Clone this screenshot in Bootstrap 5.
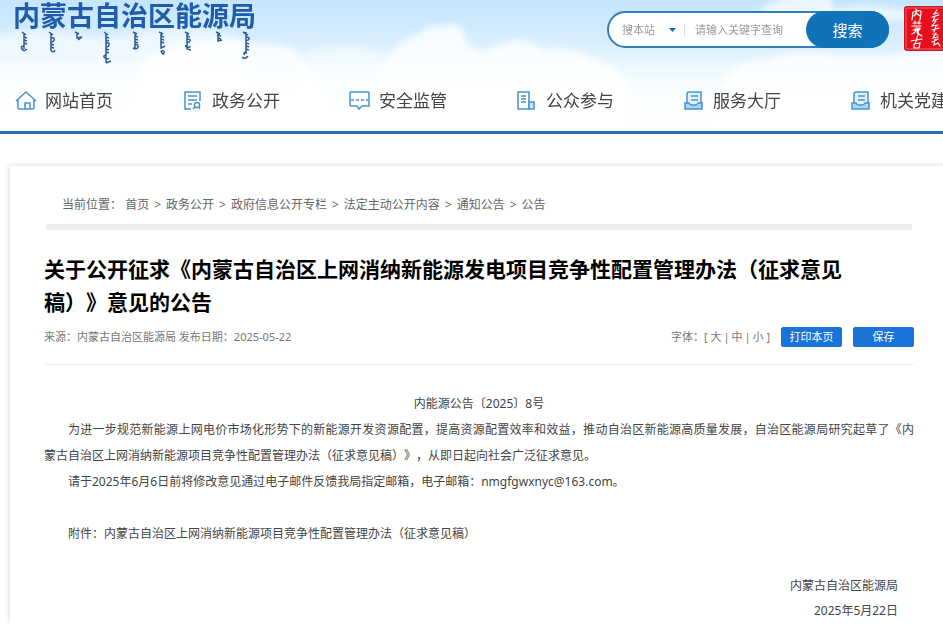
<!DOCTYPE html>
<html lang="zh-CN">
<head>
<meta charset="utf-8">
<meta name="viewport" content="width=device-width, initial-scale=1">
<title>内蒙古自治区能源局 - 通知公告</title>
<link href="https://cdn.jsdelivr.net/npm/bootstrap@5.3.0/dist/css/bootstrap.min.css" rel="stylesheet">
<style>
  body { font-family: "Noto Sans", "Noto Sans CJK SC", sans-serif; font-size: 12px; line-height: 26px; color: #444; background: #fff; overflow-x: hidden; text-spacing-trim: space-all; }
  a { color: inherit; text-decoration: none; }
  .site-header { border-bottom: 3px solid #2474b0; background: linear-gradient(#c4e5fe 0, #d9eefe 44px, #f2faff 74px, #fafdff 90px, #fff 125px); overflow: hidden; }
  .sky { inset: 0; width: 100%; height: 100%; }
  .masthead { height: 71px; padding-left: 12px; }
  .site-name { font-size: 27px; line-height: 31px; font-weight: 700; color: #1f5ca9; margin: 0; padding-left: 1px; white-space: nowrap; }
  .script-row { display: block; width: 248px; height: 36px; }
  .search-box { width: 282px; height: 37px; margin-top: 11px; margin-right: 15px; border: 2px solid #2f7fb8; border-radius: 19px; background: #fff; }
  .search-box select { width: 60px; font-size: 11px; color: #999; border: 0; background: transparent; appearance: none; padding: 0 0 0 13px; }
  .caret-mark { width: 7px; height: 4px; margin-right: 8px; }
  .search-box .divider { width: 1px; height: 12px; background: #ddd; }
  .search-box input { width: 0; font-size: 11px; border: 0; background: transparent; padding: 0 0 0 10px; outline: 0; }
  .search-box input::placeholder { color: #999; opacity: 1; }
  .search-box button { width: 83px; margin: -2px; border: 0; border-radius: 19px; background: #1072b8; color: #fff; font-size: 15px; }
  .seal { width: 46px; height: 46px; margin-top: 6px; margin-right: -7px; }
  .main-nav { height: 60px; padding-left: 15px; }
  .main-nav .nav-item { flex: 0 0 167px; }
  .main-nav a { font-size: 17px; line-height: 24px; color: #444; gap: 8px; white-space: nowrap; }
  .main-nav svg { width: 22px; height: 22px; fill: none; stroke: #4794cb; stroke-width: 1.5; }
  .sheet { margin: 32px 0 0 10px; padding: 26px 29px 0 34px; background: #fff; box-shadow: 0 0 5px 1px rgba(0,0,0,.13); clip-path: inset(-6px 0 0 -6px); }
  .crumbs { padding: 0 18px; color: #666; white-space: nowrap; }
  .crumbs .gap-mark { margin: 0 5px; }
  .crumb-bar { height: 6px; margin: 6px 2px 0; background: #eee; }
  .headline { font-size: 21px; line-height: 33px; font-weight: 700; color: #000; margin: 23px 0 0; }
  .meta { font-size: 11px; line-height: 20px; color: #777; padding: 8px 0 17px; border-bottom: 1px solid #eee; }
  .meta .bar-mark { margin: 0 2px; }
  .meta .btn { width: 61px; height: 20px; margin-left: 11px; padding: 0; font-size: 11px; line-height: 18px; border-radius: 2px; background: #1a73d6; border-color: #1a73d6; color: #fff; }
  .article { padding-top: 26px; }
  .article p { margin: 0; text-indent: 24px; }
  .article .full-line { display: block; text-align-last: justify; }
  .article .rest { display: block; text-indent: 0; }
  .sign { padding-right: 16px; line-height: 25px; }
</style>
</head>
<body>
<header class="site-header position-relative">
  <svg class="sky position-absolute" viewBox="0 0 943 131" preserveAspectRatio="none" aria-hidden="true">
    <defs><filter id="soft" x="-10%" y="-30%" width="120%" height="160%"><feGaussianBlur stdDeviation="3"/></filter></defs>
    <g fill="#fff" filter="url(#soft)">
      <path opacity=".55" d="M-10 36Q30 26 70 34T150 30Q210 24 250 44V140H-10z"/>
      <path opacity=".75" d="M140 66Q170 40 200 42Q230 34 262 44Q290 42 302 56Q314 76 330 86V140H120z"/>
      <path opacity=".5" d="M300 60Q312 44 330 48Q360 44 385 52V140H300z"/>
      <path opacity=".8" d="M385 60Q400 38 420 34Q424 24 440 26Q452 22 462 28Q466 48 482 52Q500 42 520 40Q536 42 545 50Q575 46 592 58Q620 64 630 86V140H360z"/>
      <path opacity=".75" d="M725 80Q735 58 765 60Q790 48 830 54T953 46V140H700z"/>
      <path opacity=".65" d="M760 8Q775 2 785 -4H830L835 10Q860 2 890 8T953 4V20H770z"/>
    </g>
  </svg>
  <div class="masthead position-relative d-flex align-items-start">
    <div class="me-auto">
      <h1 class="site-name">内蒙古自治区能源局</h1>
      <svg class="script-row" viewBox="0 0 248 36" fill="none" stroke="#2c5b96" stroke-width="1.5" aria-hidden="true">
        <path d="M12 2v16M10 1l4 3M12 6l3 1M12 9l3 1M12 12l3 1M12 15q-4 0-2 3t5 0"/>
        <path d="M39 2v18M37 1l4 3M39 7q4-1 3 2t-3 1M39 13l3 1M39 16l3 1M39 20q3 2 4-1"/>
        <path d="M65 2v5l5-1-4 3M63 1l4 2"/>
        <path d="M94 2v30M92 1l4 3M94 6l3 1M94 9l3 1M94 12q4-1 3 2t-3 1M94 18l3 1M94 21l3 1M94 24q-4 1-1 3t4 0M94 32l5-2"/>
        <path d="M123 1v16M121 1l4 2M123 5l3 1M123 8l3 1M123 11l3 1M123 14q4-1 3 2t-5 1"/>
        <path d="M149 1v16l4-2M147 1l4 2M149 5l3 1M149 8l3 1M149 11l3 1M149 20q4-1 3 2t-3-2"/>
        <path d="M175 1v17l4 1M173 1l4 2M175 5l3 1M175 8q4 0 3 2t-3 1M175 14q-3 1 0 2t3-1"/>
        <path d="M206 1v9l4-1M204 1l4 2M206 4l3 1M206 7l3 1"/>
        <path d="M234 1v22M231 1l5 3M234 6q4 0 3 2t-3 1M234 12l3 1M234 15l3 1M234 18l3 1M234 21q-4 1-1 3M230 26q3 3 6-1"/>
      </svg>
    </div>
    <form class="search-box d-flex" role="search">
      <select aria-label="搜索范围"><option>搜本站</option></select>
      <svg class="caret-mark align-self-center" viewBox="0 0 7 4" aria-hidden="true"><path fill="#1072b8" d="M0 0h7L3.5 4z"/></svg>
      <span class="divider align-self-center"></span>
      <input class="flex-grow-1" type="text" aria-label="关键字" placeholder="请输入关键字查询">
      <button type="button">搜索</button>
    </form>
    <svg class="seal flex-shrink-0" viewBox="0 0 46 46" role="img" aria-label="印章">
      <rect x=".5" y=".5" width="50" height="44" rx="2" fill="#e70f1c" stroke="#c91722"/>
      <rect x="2" y="2" width="48" height="41" rx="1" fill="none" stroke="#ff9ca0" stroke-width=".6"/>
      <g fill="none" stroke="#fff" stroke-width="1.2" stroke-linecap="round">
        <path d="M9 6l-1 8M10 6q8-3 7 1l-1 7M12 3q1 5-2 7M12 7l4 3"/>
        <path d="M9 17h8M11 15v3M15 15v3M8 20h9M11 22h5M9 24l6-1M13 23q-2 4-5 5M13 24q3 3 0 7M13 27l5 3M16 23l-3 3"/>
        <path d="M7 35l11-2M13 32l-2 6M10 38l6-1-1 5-5 0z"/>
        <path d="M33 4l-3 4 4-1M28 11l7-2M31 10l-2 5 5-2M32 15l-4 5 6-1M28 24l7-2M32 20l-2 6M29 28l5 1M32 27l-3 5 5-1M28 36l6-3M31 33l-1 6 4-2 2 3"/>
      </g>
    </svg>
  </div>
  <nav class="position-relative" aria-label="主导航">
    <ul class="main-nav nav flex-nowrap align-items-center">
      <li class="nav-item"><a class="d-flex align-items-center" href="#"><svg viewBox="0 0 22 22"><path d="M1 11L11 2l10 9M3 10v8q0 1 1 1h14q1 0 1-1v-8M10 19v-6h5v6"/></svg>网站首页</a></li>
      <li class="nav-item"><a class="d-flex align-items-center" href="#"><svg viewBox="0 0 22 22"><path d="M9 19H3V2h15v9M6 6h9M6 10h9M6 14h4"/><circle cx="15" cy="15" r="2.6"/><path d="M13 17l-2 2M17 17l1 2"/></svg>政务公开</a></li>
      <li class="nav-item"><a class="d-flex align-items-center" href="#"><svg viewBox="0 0 22 22"><path d="M2 2h17q1 0 1 1v13h-7l-3 3-2-3H2q-1 0-1-1V3q0-1 1-1z"/><path d="M2 10h3M7 10h3M12 10h3M17 10h2"/></svg>安全监管</a></li>
      <li class="nav-item"><a class="d-flex align-items-center" href="#"><svg viewBox="0 0 22 22"><path d="M2 2h11v17H2zM5 6h5M5 9h5M5 12h5"/><path fill="#cde8fa" d="M13 12h5v7h-5z"/></svg>公众参与</a></li>
      <li class="nav-item"><a class="d-flex align-items-center" href="#"><svg viewBox="0 0 22 22"><path fill="#e2f2fd" d="M4 14V4q0-2 2-2h12v12M8 6h7M8 10h7"/><path fill="#a9d6f5" d="M2 13h4q1 2 3 2h3q2 0 3-2h4v6H2z"/></svg>服务大厅</a></li>
      <li class="nav-item"><a class="d-flex align-items-center" href="#"><svg viewBox="0 0 22 22"><path fill="#e2f2fd" d="M4 14V4q0-2 2-2h12v12M8 6h7M8 10h7"/><path fill="#a9d6f5" d="M2 13h4q1 2 3 2h3q2 0 3-2h4v6H2z"/></svg>机关党建</a></li>
    </ul>
  </nav>
</header>

<main class="sheet">
  <nav class="crumbs" aria-label="当前位置">当前位置： <a href="#">首页</a><span class="gap-mark">&gt;</span><a href="#">政务公开</a><span class="gap-mark">&gt;</span><a href="#">政府信息公开专栏</a><span class="gap-mark">&gt;</span><a href="#">法定主动公开内容</a><span class="gap-mark">&gt;</span><a href="#">通知公告</a><span class="gap-mark">&gt;</span><a href="#">公告</a></nav>
  <div class="crumb-bar"></div>
  <h2 class="headline">关于公开征求《内蒙古自治区上网消纳新能源发电项目竞争性配置管理办法（征求意见<br>稿）》意见的公告</h2>
  <div class="meta d-flex align-items-center">
    <span class="me-auto">来源：内蒙古自治区能源局 发布日期：2025-05-22</span>
    <span>字体：[ <a href="#">大</a><span class="bar-mark">|</span><a href="#">中</a><span class="bar-mark">|</span><a href="#">小</a> ]</span>
    <button type="button" class="btn">打印本页</button>
    <button type="button" class="btn">保存</button>
  </div>
  <article class="article">
    <div class="text-center">内能源公告〔2025〕8号</div>
    <p><span class="full-line">为进一步规范新能源上网电价市场化形势下的新能源开发资源配置，提高资源配置效率和效益，推动自治区新能源高质量发展，自治区能源局研究起草了《内</span><span class="rest">蒙古自治区上网消纳新能源项目竞争性配置管理办法（征求意见稿）》，从即日起向社会广泛征求意见。</span></p>
    <p>请于2025年6月6日前将修改意见通过电子邮件反馈我局指定邮箱，电子邮箱：nmgfgwxnyc@163.com。</p>
    <p>&nbsp;</p>
    <p>附件：<a href="#">内蒙古自治区上网消纳新能源项目竞争性配置管理办法（征求意见稿）</a></p>
    <p>&nbsp;</p>
    <div class="sign text-end">内蒙古自治区能源局<br>2025年5月22日</div>
  </article>
</main>
<script src="https://cdn.jsdelivr.net/npm/bootstrap@5.3.0/dist/js/bootstrap.bundle.min.js"></script>
</body>
</html>
